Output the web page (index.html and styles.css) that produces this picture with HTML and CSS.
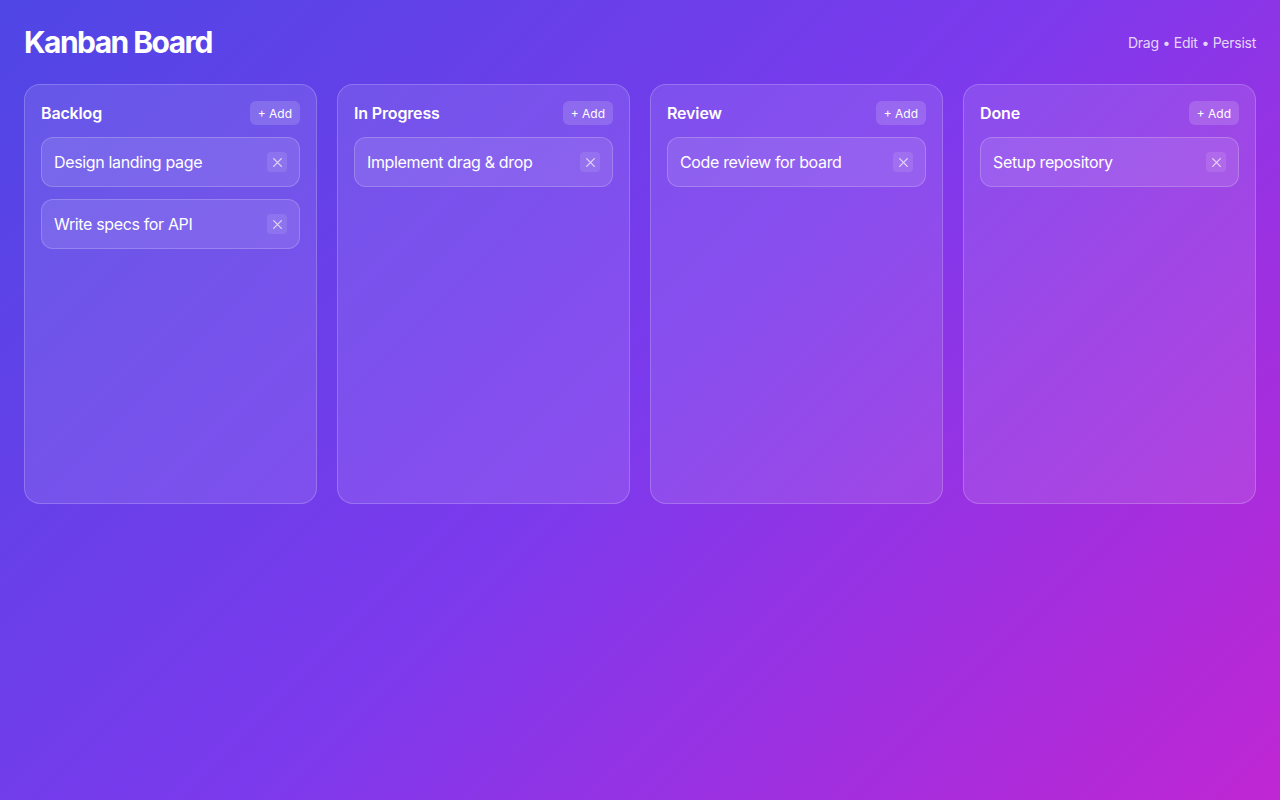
FILE: index.html
```html
<!DOCTYPE html>
<html lang="en">
<head>
<meta charset="utf-8">
<title>Kanban Board</title>
<link rel="stylesheet" href="styles.css">
</head>
<body>
<div class="app">
  <header class="topbar">
    <h1 class="title">Kanban Board</h1>
    <div class="hint">Drag • Edit • Persist</div>
  </header>
  <main class="board">
    <section class="column">
      <div class="col-head"><h2 class="col-title">Backlog</h2><button class="add-btn">+ Add</button></div>
      <div class="card"><span class="card-text">Design landing page</span><button class="close"><svg viewBox="0 0 10 10" width="11" height="11"><path d="M1.5 1.5l7 7M8.5 1.5l-7 7" stroke="currentColor" stroke-width="1.2" stroke-linecap="round"/></svg></button></div>
      <div class="card"><span class="card-text">Write specs for API</span><button class="close"><svg viewBox="0 0 10 10" width="11" height="11"><path d="M1.5 1.5l7 7M8.5 1.5l-7 7" stroke="currentColor" stroke-width="1.2" stroke-linecap="round"/></svg></button></div>
    </section>
    <section class="column">
      <div class="col-head"><h2 class="col-title">In Progress</h2><button class="add-btn">+ Add</button></div>
      <div class="card"><span class="card-text">Implement drag &amp; drop</span><button class="close"><svg viewBox="0 0 10 10" width="11" height="11"><path d="M1.5 1.5l7 7M8.5 1.5l-7 7" stroke="currentColor" stroke-width="1.2" stroke-linecap="round"/></svg></button></div>
    </section>
    <section class="column">
      <div class="col-head"><h2 class="col-title">Review</h2><button class="add-btn">+ Add</button></div>
      <div class="card"><span class="card-text">Code review for board</span><button class="close"><svg viewBox="0 0 10 10" width="11" height="11"><path d="M1.5 1.5l7 7M8.5 1.5l-7 7" stroke="currentColor" stroke-width="1.2" stroke-linecap="round"/></svg></button></div>
    </section>
    <section class="column">
      <div class="col-head"><h2 class="col-title">Done</h2><button class="add-btn">+ Add</button></div>
      <div class="card"><span class="card-text">Setup repository</span><button class="close"><svg viewBox="0 0 10 10" width="11" height="11"><path d="M1.5 1.5l7 7M8.5 1.5l-7 7" stroke="currentColor" stroke-width="1.2" stroke-linecap="round"/></svg></button></div>
    </section>
  </main>
</div>
</body>
</html>
```

FILE: styles.css
```css
* { box-sizing: border-box; }
html, body { margin: 0; height: 100%; }
body {
  font-family: Inter, "Noto Sans", "Liberation Sans", sans-serif;
  color: #fff;
  background: linear-gradient(135deg, #4f46e5 0%, #7c3aed 50%, #c026d3 100%);
  min-height: 800px;
}
.app { padding: 24px; }
.topbar {
  display: flex;
  align-items: center;
  justify-content: space-between;
  height: 36px;
  margin-bottom: 24px;
}
.title {
  margin: 0;
  font-size: 30px;
  line-height: 36px;
  font-weight: 700;
  letter-spacing: -1.55px;
}
.hint {
  font-size: 14px;
  letter-spacing: -0.25px;
  color: rgba(255,255,255,0.8);
}
.board {
  display: grid;
  grid-template-columns: repeat(4, 1fr);
  gap: 20px;
}
.column {
  min-height: 420px;
  padding: 16px;
  border-radius: 16px;
  background: rgba(255,255,255,0.1);
  border: 1px solid rgba(255,255,255,0.2);
  display: flex;
  flex-direction: column;
  gap: 12px;
}
.col-head {
  display: flex;
  align-items: center;
  justify-content: space-between;
  height: 24px;
}
.col-title {
  margin: 0;
  font-size: 16px;
  font-weight: 600;
  letter-spacing: -0.15px;
}
.add-btn {
  font-family: inherit;
  font-size: 12px;
  color: #fff;
  background: rgba(255,255,255,0.15);
  border: none;
  border-radius: 6px;
  height: 24px;
  padding: 0 8px;
  cursor: pointer;
}
.card {
  display: flex;
  align-items: center;
  justify-content: space-between;
  padding: 12px;
  border-radius: 12px;
  background: rgba(255,255,255,0.1);
  border: 1px solid rgba(255,255,255,0.2);
}
.card-text { font-size: 16px; line-height: 24px; letter-spacing: -0.35px; }
.close {
  width: 20px;
  height: 20px;
  padding: 0;
  border: none;
  border-radius: 4px;
  background: rgba(255,255,255,0.1);
  color: rgba(255,255,255,0.7);
  display: flex;
  align-items: center;
  justify-content: center;
}
```
